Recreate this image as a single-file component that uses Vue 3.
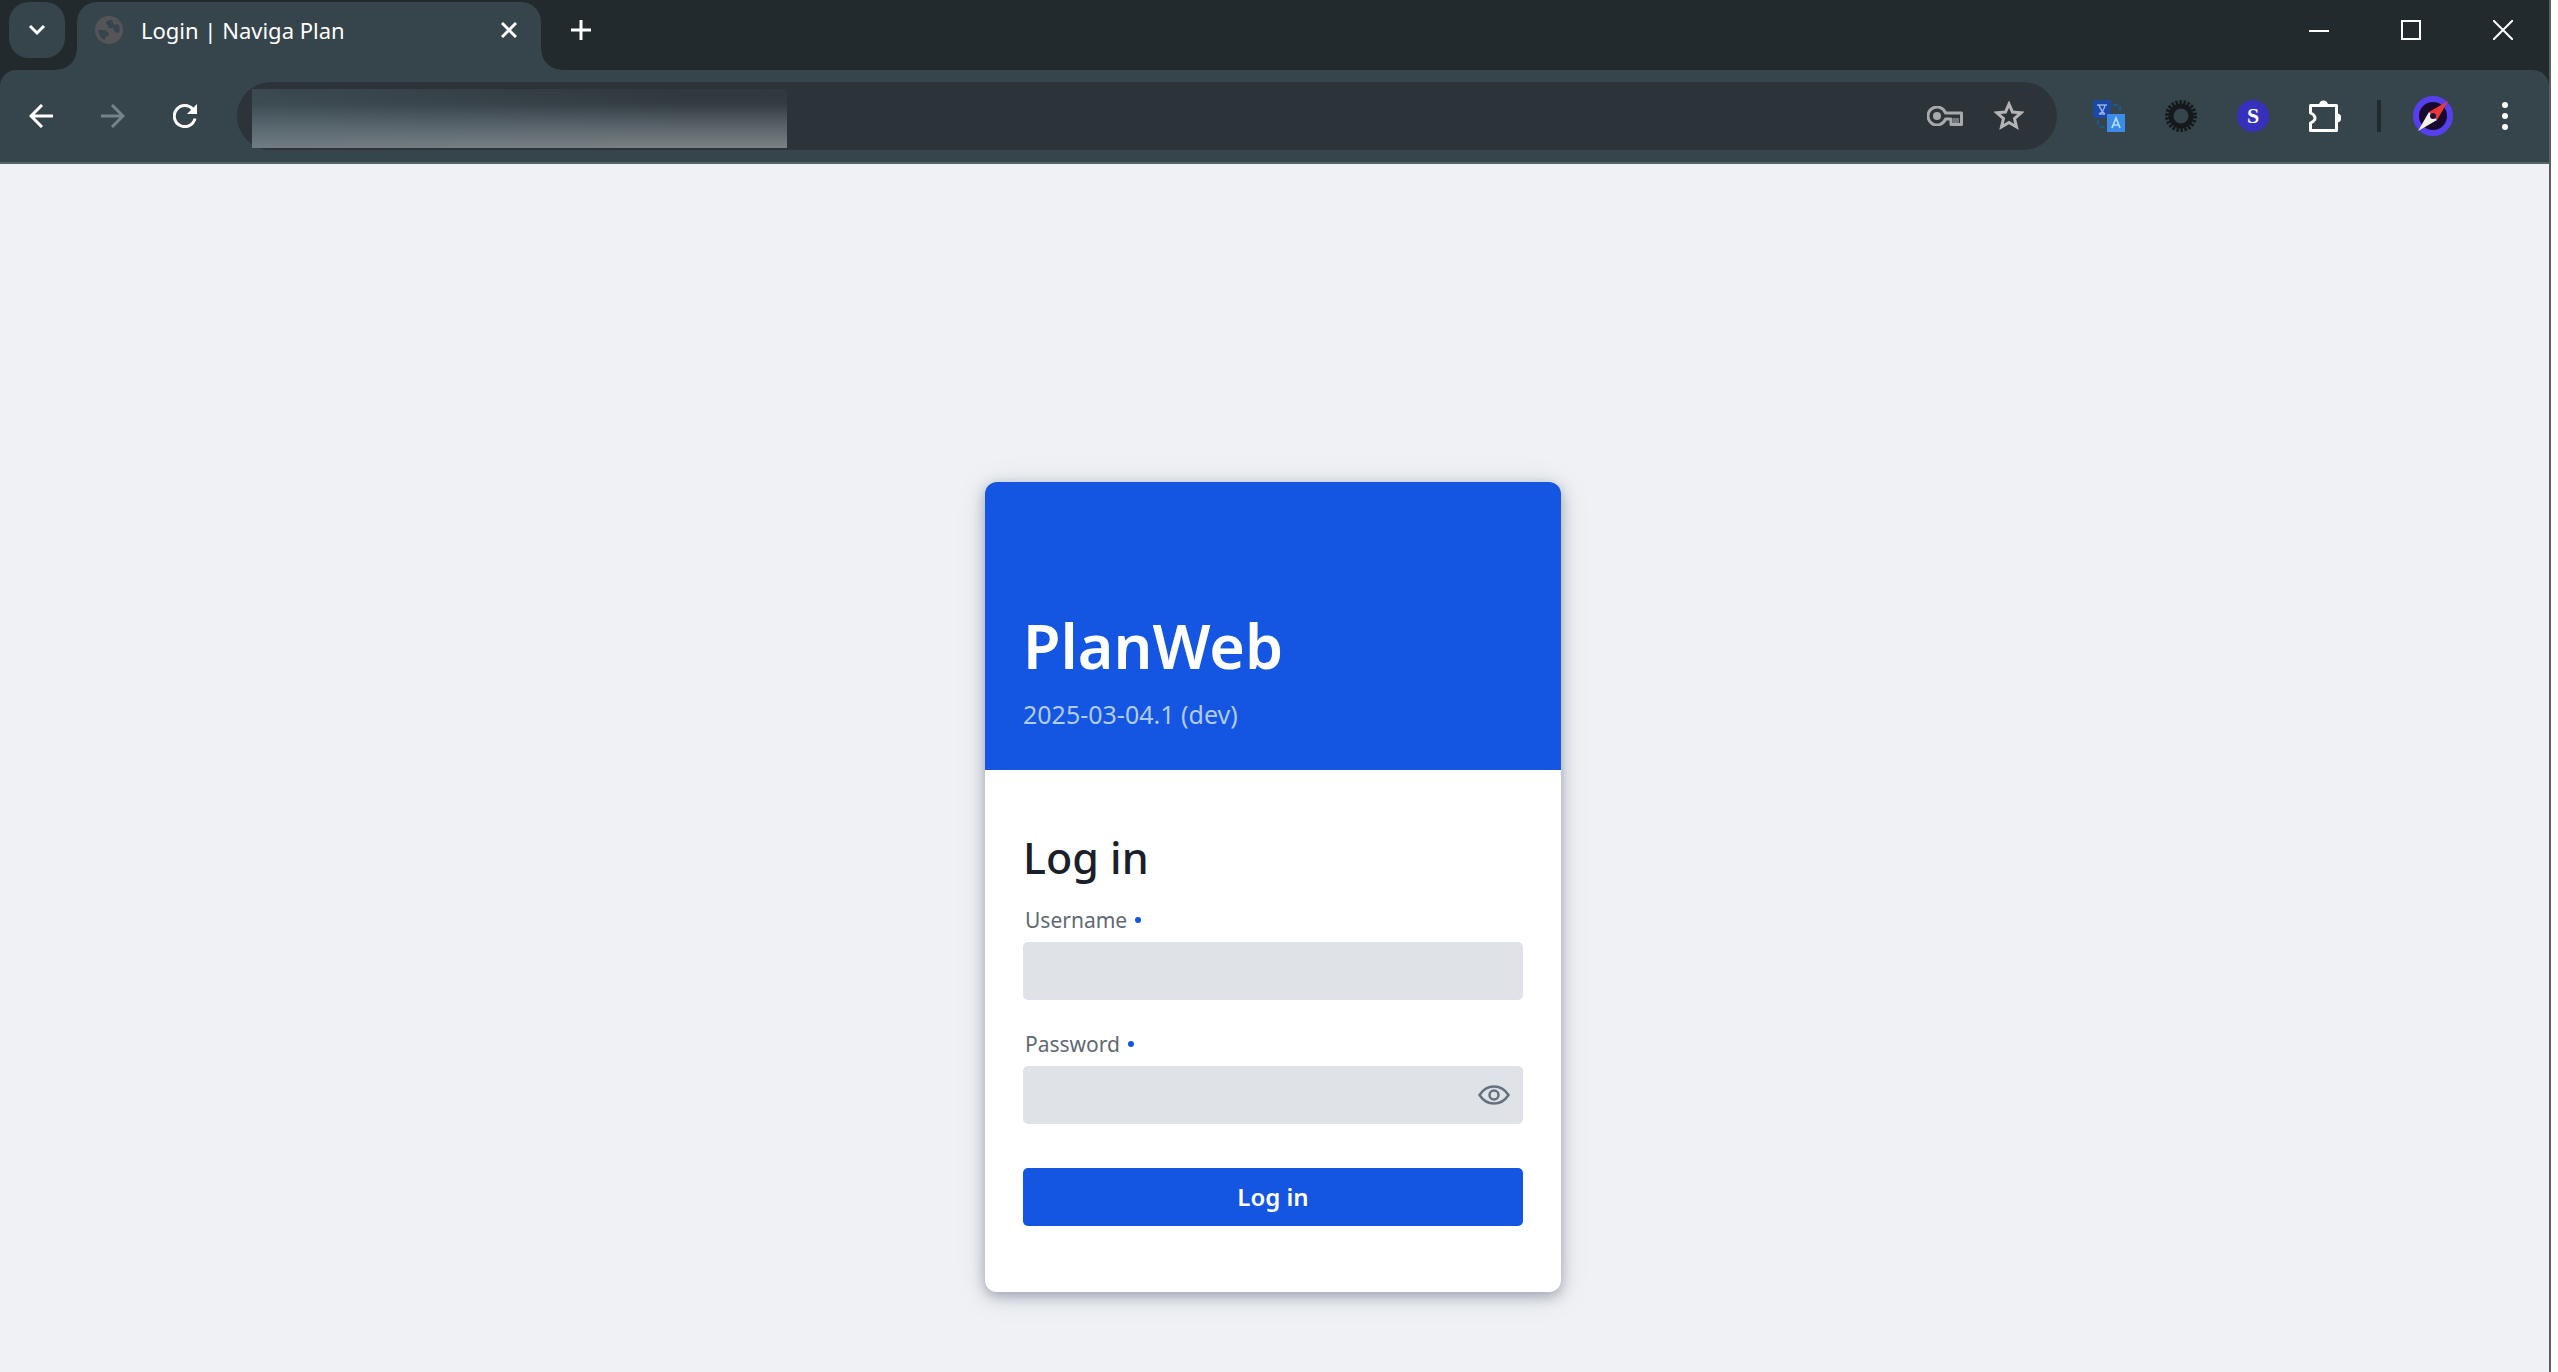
<template>
  <div class="window">
    <header class="tab-strip">
      <button class="tab-search" aria-label="Search tabs">
        <svg width="18" height="14" viewBox="0 0 18 14"><path d="M2 3l7 7 7-7" fill="none" stroke="#fff" stroke-width="3" /></svg>
      </button>
      <div class="tab">
        <svg class="tab-globe" width="28" height="28" viewBox="0 0 28 28">
          <circle cx="14" cy="14" r="14" fill="#555459" />
          <path d="M17 4q-6 0-6 4l2 1v3h5l2 4 4 1q2-5-1-9l-4 1zM3 14h7l4 3-1 3-3 1v3Q4 22 3 14z" fill="#36444b" />
        </svg>
        <span class="tab-title">Login | Naviga Plan</span>
        <button class="tab-close" aria-label="Close tab">
          <svg width="16" height="16" viewBox="0 0 16 16"><path d="M1 1l14 14M15 1L1 15" stroke="#fff" stroke-width="3" /></svg>
        </button>
      </div>
      <button class="new-tab" aria-label="New tab">
        <svg width="20" height="20" viewBox="0 0 20 20"><path d="M10 0v20M0 10h20" stroke="#fff" stroke-width="3" /></svg>
      </button>
      <div class="window-controls">
        <button aria-label="Minimize">
          <svg width="20" height="20" viewBox="0 0 20 20"><path d="M0 11h20" stroke="#fff" stroke-width="2" /></svg>
        </button>
        <button aria-label="Maximize">
          <svg width="20" height="20" viewBox="0 0 20 20"><rect x="1" y="1" width="18" height="18" fill="none" stroke="#fff" stroke-width="2" /></svg>
        </button>
        <button aria-label="Close">
          <svg width="20" height="20" viewBox="0 0 20 20"><path d="M0 0l20 20M20 0L0 20" stroke="#fff" stroke-width="2" /></svg>
        </button>
      </div>
    </header>

    <nav class="toolbar">
      <div class="nav-buttons">
        <button aria-label="Back">
          <svg width="24" height="24" viewBox="0 0 24 24"><path d="M24 12H2M13 1L2 12l11 11" fill="none" stroke="#fff" stroke-width="3" /></svg>
        </button>
        <button aria-label="Forward" disabled>
          <svg width="24" height="24" viewBox="0 0 24 24"><path d="M0 12h22M11 1l11 11-11 11" fill="none" stroke="#76838a" stroke-width="3" /></svg>
        </button>
        <button aria-label="Reload">
          <svg width="24" height="24" viewBox="0 0 24 24">
            <path d="M22 14.500a10.500 10.500 0 1 1-2-9" fill="none" stroke="#fff" stroke-width="3" />
            <path d="M24 0v10H14z" fill="#fff" />
          </svg>
        </button>
      </div>
      <div class="omnibox">
        <input v-model="address" class="address" type="text" aria-label="Address" />
        <button aria-label="Passwords">
          <svg width="36" height="20" viewBox="0 0 36 20">
            <path d="M18.500 7A9 9 0 1 0 18.500 13H24v5.500h10.500V7z" fill="none" stroke="#a8a9ab" stroke-width="3" stroke-linejoin="round" />
            <circle cx="10" cy="10" r="4" fill="#a8a9ab" />
            <rect x="26" y="12" width="6" height="5" fill="#73787c" />
          </svg>
        </button>
        <button aria-label="Bookmark this tab">
          <svg width="30" height="30" viewBox="0 0 30 30"><path d="M15 3l3.500 8 8.500.800-6.500 5.700 2 8.500-7.500-4.500L7.500 26l2-8.500L3 11.800l8.500-.8z" fill="none" stroke="#b4b4b5" stroke-width="3" /></svg>
        </button>
      </div>
      <div class="extensions">
        <button aria-label="Translate">
          <svg width="32" height="32" viewBox="0 0 32 32">
            <path d="M20 5h4q3 0 3 3v4M5 20v4q0 3 4 3h3" fill="none" stroke="#1d588f" stroke-width="2" stroke-dasharray="5 2" />
            <rect width="18" height="18" fill="#1c47a3" />
            <path d="M4 5h10M6 5q2 6 6 9M12 5q-1 6-6 9M6 14h6" fill="none" stroke="#8fb1ec" stroke-width="1.500" />
            <rect x="14" y="14" width="18" height="18" fill="#3c8ce7" />
            <path d="M19 28l4-10 4 10M20.500 25h5" fill="none" stroke="#b5dcff" stroke-width="1.700" />
          </svg>
        </button>
        <button aria-label="Page settings">
          <svg width="32" height="32" viewBox="0 0 32 32">
            <circle cx="16" cy="16" r="14" fill="none" stroke="#15191b" stroke-width="4" stroke-dasharray="2.400 1.600" />
            <circle cx="16" cy="16" r="10" fill="none" stroke="#15191b" stroke-width="5" />
          </svg>
        </button>
        <button aria-label="S extension"><span class="ext-badge">S</span></button>
        <button aria-label="Extensions">
          <svg width="32" height="32" viewBox="0 0 32 32">
            <path d="M1.500 5.500h26v25h-26v-7.500q4.500-2 4.500-5t-4.500-5z" fill="none" stroke="#fff" stroke-width="3" stroke-linejoin="round" />
            <path d="M10 5a4.500 4.500 0 0 1 9 0zM28 13.500a4.500 4.500 0 0 1 0 9z" fill="#fff" />
          </svg>
        </button>
        <span class="separator"></span>
        <button aria-label="Profile">
          <svg width="40" height="40" viewBox="0 0 40 40">
            <circle cx="20" cy="20" r="17" fill="#170a2b" stroke="#563fed" stroke-width="6" />
            <path d="M35 5L16 16l8 8z" fill="#ee3838" />
            <path d="M5 35l11-19 8 8z" fill="#f2f0ee" />
            <circle cx="20" cy="20" r="3" fill="#221235" />
          </svg>
        </button>
        <button aria-label="Menu">
          <svg width="8" height="30" viewBox="0 0 8 30">
            <circle v-for="y in [4, 15, 26]" :key="y" cx="4" :cy="y" r="3" fill="#fff" />
          </svg>
        </button>
      </div>
    </nav>

    <main class="page">
      <section class="card">
        <div class="card-header">
          <h1>PlanWeb</h1>
          <p>2025-03-04.1 (dev)</p>
        </div>
        <form class="login" @submit.prevent>
          <h2>Log in</h2>
          <label for="username">Username <span class="required"></span></label>
          <input id="username" v-model="username" class="field" type="text" />
          <label for="password">Password <span class="required"></span></label>
          <div class="password">
            <input id="password" v-model="password" class="field" :type="showPassword ? 'text' : 'password'" />
            <button type="button" class="reveal" aria-label="Show password" @click="showPassword = !showPassword">
              <svg width="32" height="20" viewBox="0 0 32 20">
                <path d="M1.500 10Q7 1.500 16 1.500T30.500 10Q25 18.500 16 18.500T1.500 10z" fill="none" stroke="#65717d" stroke-width="2.500" />
                <circle cx="16" cy="10" r="4.500" fill="none" stroke="#65717d" stroke-width="2.500" />
              </svg>
            </button>
          </div>
          <button class="submit" type="submit">Log in</button>
        </form>
      </section>
    </main>
  </div>
</template>

<script setup>
import { ref } from 'vue'

const address = ref('')
const username = ref('')
const password = ref('')
const showPassword = ref(false)
</script>

<style>
body {
  margin: 0;
  background: #fff;
}
</style>

<style scoped>
* {
  box-sizing: border-box;
}
.window {
  display: flex;
  flex-direction: column;
  min-height: 100vh;
  margin-right: 7px;
  border-right: 2px solid #5c5e60;
  background: #232a2d;
  font-family: "Noto Sans", "Open Sans", sans-serif;
}
button {
  display: flex;
  align-items: center;
  justify-content: center;
  padding: 0;
  border: 0;
  background: none;
  font-family: inherit;
  cursor: pointer;
}
svg {
  display: block;
}

.tab-strip {
  display: flex;
  height: 70px;
  padding: 2px 0 0 9px;
}
.tab-search {
  width: 56px;
  height: 56px;
  border-radius: 20px;
  background: #36444b;
}
.tab {
  position: relative;
  display: flex;
  align-items: center;
  width: 464px;
  margin-left: 12px;
  padding: 0 24px 12px 18px;
  border-radius: 20px 20px 0 0;
  background: #36444b;
}
/* curved feet that join the tab to the toolbar */
.tab::before,
.tab::after {
  content: "";
  position: absolute;
  bottom: 0;
  width: 20px;
  height: 20px;
}
.tab::before {
  right: 100%;
  background: radial-gradient(circle at 0 0, transparent 19px, #36444b 20px);
}
.tab::after {
  left: 100%;
  background: radial-gradient(circle at 100% 0, transparent 19px, #36444b 20px);
}
.tab-title {
  flex: 1;
  margin-left: 18px;
  color: #fff;
  font-size: 22px;
  line-height: 32px;
}
.new-tab {
  width: 56px;
  height: 56px;
  margin-left: 12px;
}
.window-controls {
  display: flex;
  margin-left: auto;
}
.window-controls button {
  width: 92px;
  height: 56px;
}

.toolbar {
  display: flex;
  align-items: center;
  height: 94px;
  padding: 0 8px 0 5px;
  border-bottom: 2px solid #57656b;
  border-radius: 16px 16px 0 0;
  background: #36444b;
}
.nav-buttons,
.extensions {
  display: flex;
  align-items: center;
}
.nav-buttons button,
.extensions button {
  width: 72px;
  height: 56px;
}
.omnibox {
  display: flex;
  flex: 1;
  align-items: center;
  height: 68px;
  margin: 0 16px;
  padding: 0 33px 0 15px;
  border-radius: 34px;
  background: #2c343a;
}
.omnibox button {
  margin-left: 31px;
}
.address {
  width: 535px;
  height: 59px;
  margin-top: 5px;
  margin-right: auto;
  padding: 0 16px;
  border: 0;
  background:
    linear-gradient(90deg, rgba(85, 112, 123, 0.3), transparent 80%),
    linear-gradient(#30373d, #333c42 25%, #5b646b 65%, #7b8184);
  color: #fff;
  font-size: 22px;
}
.ext-badge {
  width: 32px;
  height: 32px;
  border-radius: 50%;
  background: #3730bd;
  color: #fff;
  font-family: "Liberation Serif", serif;
  font-size: 22px;
  font-weight: 700;
  line-height: 32px;
}
.separator {
  width: 4px;
  height: 32px;
  margin: 0 16px;
  background: #232a2d;
}

.page {
  flex: 1;
  padding: 318px 3px 80px 0;
  background: #eff1f4;
}
.card {
  width: 576px;
  margin: 0 auto;
  border-radius: 12px;
  background: #fff;
  box-shadow:
    0 4px 14px rgba(30, 30, 70, 0.34),
    0 4px 32px rgba(30, 60, 60, 0.1);
}
.card-header {
  display: flex;
  flex-direction: column;
  justify-content: flex-end;
  height: 288px;
  padding: 0 38px 40px;
  border-radius: 12px 12px 0 0;
  background: #1455e2;
}
h1,
h2,
p {
  margin: 0;
}
h1 {
  color: #fff;
  font-size: 61px;
  font-weight: 600;
  line-height: 80px;
}
p {
  margin-top: 12px;
  color: #b0cbf8;
  font-size: 25px;
  line-height: 32px;
}
.login {
  display: flex;
  flex-direction: column;
  padding: 58px 38px 66px;
}
h2 {
  color: #1a202a;
  font-size: 43px;
  font-weight: 500;
  line-height: 60px;
}
label {
  display: flex;
  align-items: center;
  padding: 16px 2px 6px;
  color: #606973;
  font-size: 21px;
  line-height: 32px;
}
.required {
  width: 6px;
  height: 6px;
  margin-left: 8px;
  border-radius: 50%;
  background: #1455e2;
}
.field {
  width: 100%;
  height: 58px;
  padding: 0 16px;
  border: 0;
  border-radius: 5px;
  background: #dfe3e8;
  font-size: 22px;
}
.field + label {
  padding-top: 28px;
}
.password {
  position: relative;
}
.reveal {
  position: absolute;
  top: 0;
  right: 0;
  width: 58px;
  height: 58px;
}
.submit {
  height: 58px;
  margin-top: 44px;
  border-radius: 5px;
  background: #1455e2;
  color: #fff;
  font-size: 24px;
  font-weight: 600;
  line-height: 32px;
}
</style>
